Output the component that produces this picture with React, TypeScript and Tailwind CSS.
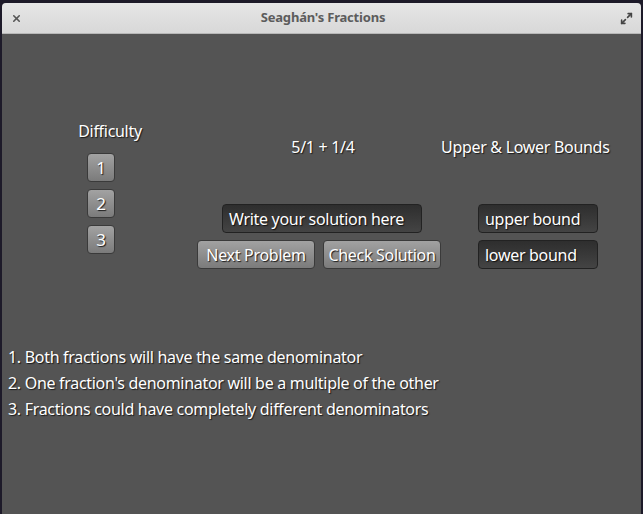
import { Maximize2, X } from 'lucide-react';

const levels = ['1', '2', '3'];

const notes = [
    '1. Both fractions will have the same denominator',
    "2. One fraction's denominator will be a multiple of the other",
    '3. Fractions could have completely different denominators',
];

const shadow = '[text-shadow:1px_1px_1px_#1a1a1a]';

const Button = ({ label, className = '' }: { label: string; className?: string }) => (
    <button
        className={`flex h-[29px] items-center justify-center rounded-[4px] border border-[#3a3a3a] bg-gradient-to-b from-[#a2a2a2] to-[#7b7b7b] text-[16px] tracking-[-0.3px] text-white [text-shadow:1px_1px_1px_#1a1a1a] ${className}`}
    >
        {label}
    </button>
);

const Field = ({ placeholder, className = '' }: { placeholder: string; className?: string }) => (
    <div
        className={`flex h-[29px] items-center rounded-[4px] border border-[#222] bg-gradient-to-b from-[#2e2e2e] to-[#444] px-[6px] text-[16px] tracking-[-0.3px] text-white [text-shadow:1px_1px_1px_#111] ${className}`}
    >
        {placeholder}
    </div>
);

export default function App() {
    return (
        <div className="h-[514px] w-[643px] overflow-hidden bg-[#1d1a29] pt-[3px] pl-[2px] pr-[2px] font-['Noto_Sans',sans-serif]">
            <div className="flex h-full flex-col overflow-hidden rounded-t-[4px] bg-[#545454]">
                <div className="flex h-[31px] items-center justify-between border-b border-[#b8b8b8] bg-gradient-to-b from-[#e6e6e6] to-[#d8d8d8] pl-[9px] pr-[8px]">
                    <X className="h-[11px] w-[11px] text-[#555]" strokeWidth={3.5} />
                    <span className="ml-[4px] text-[13px] font-bold tracking-[-0.2px] text-[#5c5c5c]">Seaghán's Fractions</span>
                    <Maximize2 className="h-[13px] w-[13px] text-[#444]" strokeWidth={3} />
                </div>

                <div className="flex text-white">
                    <div className={`flex w-[195px] flex-col items-center pt-[85px] pl-[21px] tracking-[-0.3px] ${shadow}`}>
                        <span className="text-[16px] leading-6">Difficulty</span>
                        <div className="mt-[10px] mr-[18px] flex flex-col gap-[7px]">
                            {levels.map((l) => (
                                <Button key={l} label={l} className="w-[28px] text-[17px]" />
                            ))}
                        </div>
                    </div>

                    <div className="flex w-[244px] flex-col items-center pt-[101px]">
                        <span className={`pl-[8px] text-[16px] leading-6 tracking-[-0.3px] ${shadow}`}>5/1 + 1/4</span>
                        <Field placeholder="Write your solution here" className="mt-[45px] ml-[6px] w-[200px]" />
                        <div className="mt-[7px] flex gap-[8px]">
                            <Button label="Next Problem" className="w-[118px]" />
                            <Button label="Check Solution" className="w-[118px]" />
                        </div>
                    </div>

                    <div className="flex flex-col pt-[101px]">
                        <span className={`text-[16px] leading-6 tracking-[-0.3px] ${shadow}`}>Upper &amp; Lower Bounds</span>
                        <div className="mt-[45px] ml-[37px] flex flex-col gap-[7px]">
                            <Field placeholder="upper bound" className="w-[120px]" />
                            <Field placeholder="lower bound" className="w-[120px]" />
                        </div>
                    </div>
                </div>

                <div className={`mt-[75px] flex flex-col pl-[6px] text-[16px] leading-[26px] tracking-[-0.3px] text-white ${shadow}`}>
                    {notes.map((n) => (
                        <span key={n}>{n}</span>
                    ))}
                </div>
            </div>
        </div>
    );
}
